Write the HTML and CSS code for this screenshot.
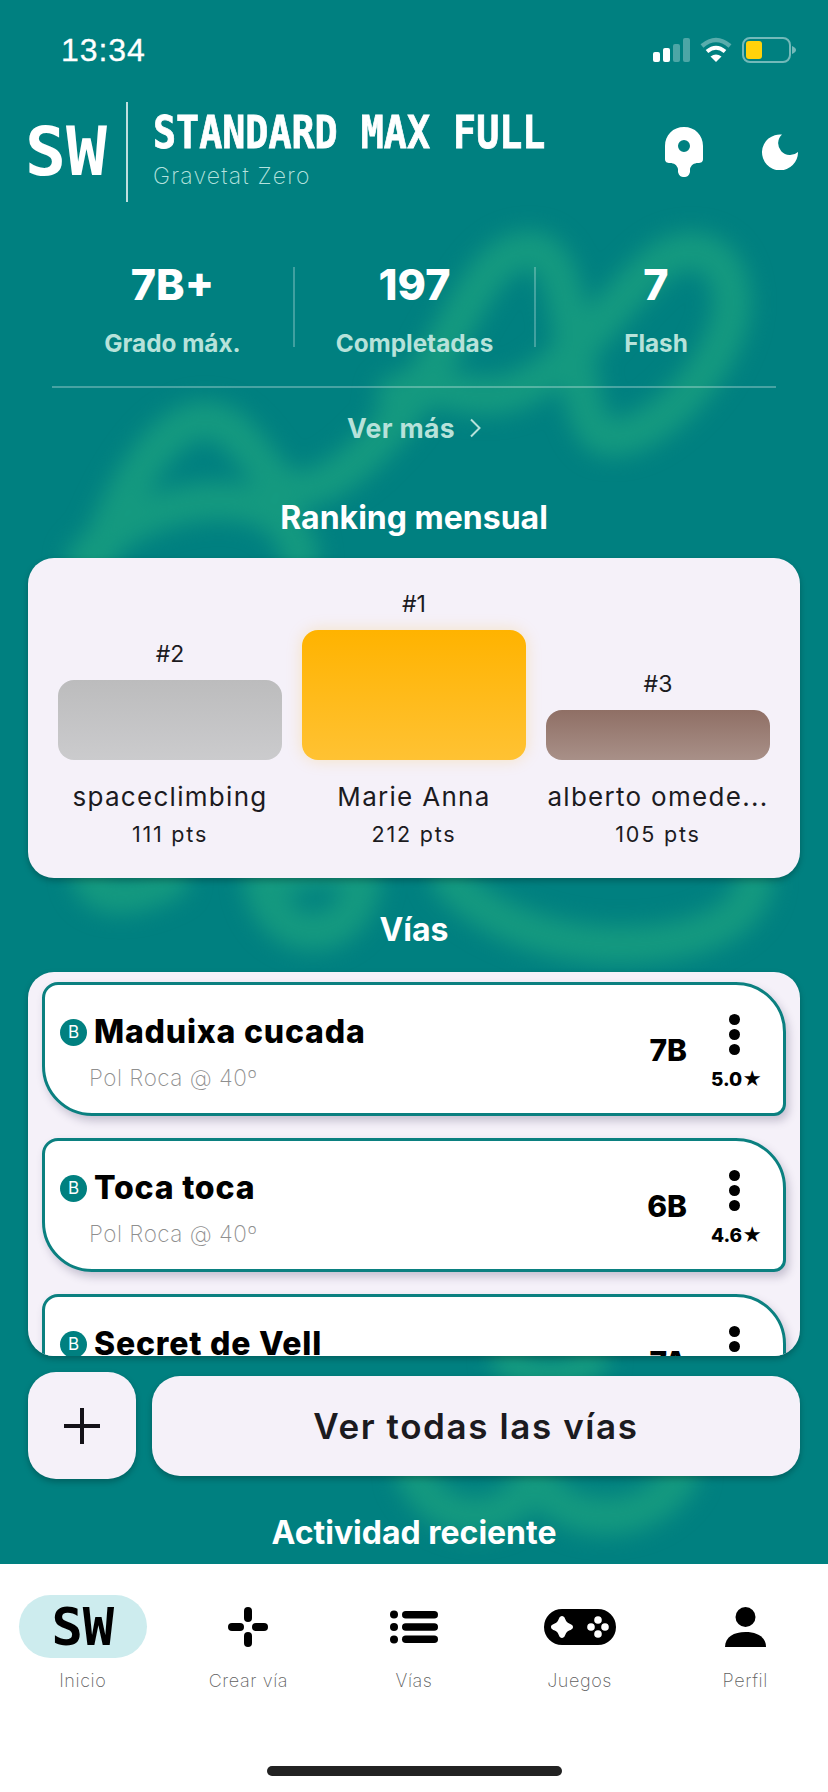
FILE: index.html
```html
<!DOCTYPE html>
<html lang="es">
<head>
<meta charset="utf-8">
<title>Standard Max Full</title>
<link rel="stylesheet" href="styles.css">
</head>
<body>
<div class="app">
  <main class="main">
    <svg class="decor" viewBox="0 0 828 1564" aria-hidden="true">
      <path d="M75 660C85 550 150 420 205 420C250 420 265 495 300 490C345 485 400 425 430 370C470 300 490 250 530 250C585 250 565 425 605 437C660 445 735 350 732 300C730 250 690 240 660 262C615 295 565 385 500 395C450 400 430 375 395 395"/>
      <path d="M85 560C130 505 230 485 275 515C300 535 300 555 300 560"/>
      <path d="M90 875C95 900 130 900 170 880M262 880C270 945 350 950 362 885C368 860 300 860 270 885M450 880C490 925 560 945 620 945C700 945 750 920 755 880"/>
      <path d="M415 1475C440 1530 510 1530 535 1475C560 1530 650 1530 680 1475M510 1360C530 1385 570 1385 590 1360"/>
    </svg>
    <div class="status">
      <span class="time">13:34</span>
      <div class="status-icons">
        <svg class="ic-signal" viewBox="0 0 37 25"><rect x="0" y="15" width="7" height="10" rx="2" fill="#fff"/><rect x="10" y="11" width="7" height="14" rx="2" fill="#fff"/><rect x="20" y="7" width="7" height="18" rx="2" fill="#fff" opacity=".3"/><rect x="30" y="1" width="7" height="24" rx="2" fill="#fff" opacity=".3"/></svg>
        <svg class="ic-wifi" viewBox="0 0 32 25"><path d="M2 9Q16 -3 30 9" fill="none" stroke="#fff" stroke-width="4.5" opacity=".35"/><path d="M7 14.500Q16 7 25 14.500" fill="none" stroke="#fff" stroke-width="4"/><path d="M10.500 19.500L16 25L21.500 19.500Q16 15.500 10.500 19.500Z" fill="#fff"/></svg>
        <svg class="ic-battery" viewBox="0 0 54 26"><rect x="1" y="1" width="47" height="24" rx="7" fill="none" stroke="#fff" stroke-opacity=".45" stroke-width="2"/><rect x="4" y="4" width="16" height="18" rx="3" fill="#ffd20a"/><path d="M50 9C53 10 54 12 54 13C54 14 53 16 50 17Z" fill="#fff" fill-opacity=".45"/></svg>
      </div>
    </div>

    <header class="head">
      <span class="logo">SW</span>
      <span class="head-rule"></span>
      <div class="head-text">
        <h1 class="wall">STANDARD MAX FULL</h1>
        <p class="gym">Gravetat Zero</p>
      </div>
      <svg class="ic-pin" viewBox="0 0 38 50"><path fill="#fff" fill-rule="evenodd" d="M19 0C30 0 38 8 38 19V32C38 35 36 36 33 36C29 36 26 38 25 42V45C24 49 22 50 19 50C16 50 14 49 13 45V42C12 38 9 36 5 36C2 36 0 35 0 32V19C0 8 8 0 19 0ZM19 13A6 6 0 1 0 19 25A6 6 0 1 0 19 13Z"/></svg>
      <svg class="ic-moon" viewBox="0 0 36 36"><path fill="#fff" d="M20 0.500A18 18 0 1 0 36 18A11.500 11.500 0 0 1 20 0.500Z"/></svg>
    </header>

    <section class="stats">
      <div class="stat"><b class="stat-value">7B+</b><span class="stat-label">Grado máx.</span></div>
      <div class="stat stat-mid"><b class="stat-value">197</b><span class="stat-label">Completadas</span></div>
      <div class="stat"><b class="stat-value">7</b><span class="stat-label">Flash</span></div>
    </section>
    <div class="more">Ver más
      <svg class="ic-chev" viewBox="0 0 12 20"><path d="M2 1.500L10.500 10L2 18.500" fill="none" stroke="currentColor" stroke-width="2"/></svg>
    </div>

    <h2 class="section-title first">Ranking mensual</h2>
    <section class="card podium">
      <div class="pod-col"><span class="pos">#2</span><div class="bar bar-silver"></div><span class="pod-name">spaceclimbing</span><span class="pod-pts">111 pts</span></div>
      <div class="pod-col"><span class="pos">#1</span><div class="bar bar-gold"></div><span class="pod-name">Marie Anna</span><span class="pod-pts">212 pts</span></div>
      <div class="pod-col"><span class="pos">#3</span><div class="bar bar-bronze"></div><span class="pod-name">alberto omede...</span><span class="pod-pts">105 pts</span></div>
    </section>

    <h2 class="section-title vias">Vías</h2>
    <section class="card routes">
      <article class="route">
        <div class="route-main">
          <div class="route-head"><span class="badge">B</span><span class="route-name">Maduixa cucada</span></div>
          <p class="route-sub">Pol Roca @ 40º</p>
        </div>
        <span class="grade">7B</span>
        <div class="route-side"><span class="dots"><i></i><i></i><i></i></span><span class="rating">5.0★</span></div>
      </article>
      <article class="route">
        <div class="route-main">
          <div class="route-head"><span class="badge">B</span><span class="route-name">Toca toca</span></div>
          <p class="route-sub">Pol Roca @ 40º</p>
        </div>
        <span class="grade">6B</span>
        <div class="route-side"><span class="dots"><i></i><i></i><i></i></span><span class="rating">4.6★</span></div>
      </article>
      <article class="route">
        <div class="route-main">
          <div class="route-head"><span class="badge">B</span><span class="route-name">Secret de Vell</span></div>
          <p class="route-sub">Pol Roca @ 40º</p>
        </div>
        <span class="grade">7A</span>
        <div class="route-side"><span class="dots"><i></i><i></i><i></i></span><span class="rating">4.8★</span></div>
      </article>
    </section>

    <div class="actions">
      <button class="btn-add" aria-label="Añadir"><svg class="ic-plus" viewBox="0 0 36 36"><path d="M18 0V36M0 18H36" stroke="#141218" stroke-width="4"/></svg></button>
      <button class="btn-all">Ver todas las vías</button>
    </div>

    <h2 class="section-title activity">Actividad reciente</h2>
  </main>

  <nav class="nav">
    <div class="nav-items">
      <div class="nav-item">
        <span class="nav-icon active"><span class="logo-small">SW</span></span>
        <span class="nav-label">Inicio</span>
      </div>
      <div class="nav-item">
        <span class="nav-icon"><svg class="ic-create" viewBox="0 0 40 40"><rect x="16" y="0" width="8" height="15" rx="4"/><rect x="16" y="25" width="8" height="15" rx="4"/><rect x="0" y="16" width="16" height="8" rx="4"/><rect x="24" y="16" width="16" height="8" rx="4"/></svg></span>
        <span class="nav-label">Crear vía</span>
      </div>
      <div class="nav-item">
        <span class="nav-icon"><svg class="ic-list" viewBox="0 0 48 34"><circle cx="4" cy="4.500" r="4"/><circle cx="4" cy="17" r="4"/><circle cx="4" cy="29.500" r="4"/><rect x="12" y="1" width="36" height="7.500" rx="3.750"/><rect x="12" y="13.250" width="36" height="7.500" rx="3.750"/><rect x="12" y="25.500" width="36" height="7.500" rx="3.750"/></svg></span>
        <span class="nav-label">Vías</span>
      </div>
      <div class="nav-item">
        <span class="nav-icon"><svg class="ic-game" viewBox="0 0 72 36"><path fill-rule="evenodd" d="M18 0H54A18 18 0 0 1 54 36H18A18 18 0 0 1 18 0ZM18 7C21 7 21 11 23 13C25 15 29 15 29 18C29 21 25 21 23 23C21 25 21 29 18 29C15 29 15 25 13 23C11 21 7 21 7 18C7 15 11 15 13 13C15 11 15 7 18 7Z"/><g fill="#fff"><circle cx="54" cy="11" r="3.800"/><circle cx="54" cy="25" r="3.800"/><circle cx="47" cy="18" r="3.800"/><circle cx="61" cy="18" r="3.800"/></g></svg></span>
        <span class="nav-label">Juegos</span>
      </div>
      <div class="nav-item">
        <span class="nav-icon"><svg class="ic-user" viewBox="0 0 41 40"><circle cx="20.500" cy="10" r="10"/><path d="M0 40C0 30 9 25 20.500 25C32 25 41 30 41 40Z"/></svg></span>
        <span class="nav-label">Perfil</span>
      </div>
    </div>
    <div class="home-bar"></div>
  </nav>
</div>
</body>
</html>
```
FILE: styles.css
```css
* { box-sizing: border-box; }
html, body { margin: 0; padding: 0; }
body { font-family: "Inter", "DejaVu Sans", sans-serif; background: #fff; }
h1, h2, p { margin: 0; }

.app { width: 828px; height: 1792px; display: flex; flex-direction: column; overflow: hidden; }
.main { position: relative; height: 1564px; background: #008080; overflow: hidden; color: #fff; }
.main > * { position: relative; }
.main > .decor { position: absolute; left: 0; top: 0; width: 828px; height: 1564px; filter: blur(11px); }
.decor path { fill: none; stroke: #14997f; stroke-width: 38; stroke-linecap: round; stroke-linejoin: round; }

.status { height: 102px; padding: 36px 32px 0 61px; display: flex; justify-content: space-between; align-items: flex-start; }
.time { font: 400 32px/28px "Liberation Sans", sans-serif; letter-spacing: .9px; -webkit-text-stroke: .3px #fff; }
.status-icons { display: flex; align-items: flex-start; gap: 10px; padding-top: 1px; }
.ic-signal { width: 37px; height: 25px; }
.ic-wifi { width: 32px; height: 25px; }
.ic-battery { width: 54px; height: 26px; }

.head { height: 100px; padding: 0 30px 0 25px; display: flex; align-items: center; }
.logo { width: 82px; font: 700 68px/70px "DejaVu Sans Mono", monospace; }
.head-rule { width: 2px; height: 100px; margin: 0 25px 0 19px; background: rgba(255,255,255,.75); }
.head-text { flex: 1; align-self: flex-start; padding-top: 8px; }
.wall { font: 700 45px/46px "DejaVu Sans Mono", monospace; white-space: nowrap; -webkit-text-stroke: .8px #fff; transform: scaleX(.852); transform-origin: left; }
.gym { margin-top: 6px; font-size: 23px; line-height: 28px; font-weight: 200; color: #b5e2de; letter-spacing: 1.200px; }
.ic-pin { width: 38px; height: 50px; margin: 0 59px 0 0; }
.ic-moon { width: 36px; height: 36px; }

.stats { margin: 65px 52px 0; padding-bottom: 39px; border-bottom: 2px solid rgba(255,255,255,.28); display: grid; grid-template-columns: 241px 1fr 240px; height: 121px; }
.stat { height: 80px; display: flex; flex-direction: column; align-items: center; }
.stat-mid { border-left: 2px solid rgba(255,255,255,.25); border-right: 2px solid rgba(255,255,255,.25); }
.stat-value { margin-top: -5px; font-size: 43px; line-height: 44px; font-weight: 800; }
.stat-label { margin-top: 23px; font-size: 24.300px; line-height: 28px; font-weight: 700; color: #b7e2da; }

.more { height: 80px; display: flex; align-items: center; justify-content: center; gap: 14px; font-size: 26.500px; font-weight: 700; color: #b7e2da; letter-spacing: .4px; }
.ic-chev { width: 12px; height: 20px; }

.section-title { height: 40px; text-align: center; font-size: 32px; line-height: 40px; font-weight: 700; }
.section-title.first { margin-top: 30px; }
.section-title.vias { margin-top: 32px; }
.section-title.activity { margin-top: 34px; }

.card { margin: 20px 28px 0; background: #f5f1f9; border-radius: 26px; box-shadow: 0 3px 6px rgba(0,0,0,.25); color: #1c1b1f; }

.podium { height: 320px; padding: 0 30px; display: grid; grid-template-columns: repeat(3, 224px); gap: 20px; }
.pod-col { display: flex; flex-direction: column; align-items: center; justify-content: flex-end; padding-bottom: 30px; }
.pos { font-size: 23px; line-height: 30px; margin-bottom: 11px; }
.bar { width: 100%; border-radius: 16px; }
.bar-silver { height: 80px; background: linear-gradient(#bcbcbd, #cbcbcd); }
.bar-gold { height: 130px; background: linear-gradient(#ffb300, #ffc233); box-shadow: 0 0 16px rgba(255,179,0,.22); }
.bar-bronze { height: 50px; background: linear-gradient(#8f6f65, #a89088); }
.pod-name { margin-top: 21px; font-size: 26px; line-height: 32px; letter-spacing: 1.300px; white-space: nowrap; }
.pod-pts { margin-top: 7px; font-size: 21.500px; line-height: 28px; letter-spacing: 1.800px; }

.routes { margin-top: 22px; height: 384px; padding: 10px 14px; overflow: hidden; display: flex; flex-direction: column; gap: 22px; }
.route { flex: none; height: 134px; padding: 27px 20px 0 15px; display: flex; align-items: flex-start; background: #fff; border: 3px solid #0b8080; border-radius: 16px 50px 12px 50px; box-shadow: 3px 5px 8px rgba(60,50,90,.25); color: #000; }
.route-main { flex: 1; min-width: 0; }
.route-head { display: flex; align-items: center; gap: 7px; height: 40px; }
.badge { width: 27px; height: 27px; border-radius: 50%; background: #008080; color: #fff; font-size: 17px; line-height: 27px; text-align: center; }
.route-name { font-size: 32px; line-height: 40px; font-weight: 800; letter-spacing: .8px; white-space: nowrap; }
.route-sub { margin: 12px 0 0 29px; font-size: 22.500px; line-height: 28px; font-weight: 200; color: #8f8f8f; letter-spacing: .5px; }
.grade { margin: 18px 22px 0 0; font-size: 30px; line-height: 40px; font-weight: 800; }
.route-side { width: 54px; margin-top: 2px; display: flex; flex-direction: column; }
.dots { display: flex; flex-direction: column; gap: 4px; margin-left: 20px; }
.dots i { display: block; width: 11px; height: 11px; border-radius: 50%; background: #000; }
.rating { margin: 13px 0 0 2px; font-size: 19px; line-height: 24px; font-weight: 800; white-space: nowrap; }

.actions { margin: 16px 28px 0; height: 107px; display: flex; align-items: center; gap: 16px; }
.actions button { border: 0; background: #f5f1f9; box-shadow: 0 3px 6px rgba(0,0,0,.25); color: #1c1b1f; }
.btn-add { width: 108px; height: 107px; border-radius: 28px; display: flex; align-items: center; justify-content: center; padding: 0; }
.ic-plus { width: 36px; height: 36px; }
.btn-all { flex: 1; height: 100px; border-radius: 28px; font: 600 35px/40px "Inter", sans-serif; letter-spacing: 1.600px; }

.nav { height: 228px; background: #fff; display: flex; flex-direction: column; }
.nav-items { display: grid; grid-template-columns: repeat(5, 1fr); padding: 31px 0 0; }
.nav-item { display: flex; flex-direction: column; align-items: center; }
.nav-icon { width: 128px; height: 63px; border-radius: 32px; display: flex; align-items: center; justify-content: center; }
.nav-icon.active { background: #cdecee; }
.nav-icon svg { fill: #000; display: block; }
.logo-small { font: 700 52px/56px "DejaVu Sans Mono", monospace; color: #000; }
.nav-label { margin-top: 9px; font-size: 18px; line-height: 28px; font-weight: 200; color: #5f5f5f; letter-spacing: .6px; }
.ic-create { width: 40px; height: 40px; }
.ic-list { width: 48px; height: 34px; }
.ic-game { width: 72px; height: 36px; }
.ic-user { width: 41px; height: 40px; }
.home-bar { width: 295px; height: 10px; margin: 71px auto 0; background: #222; border-radius: 5px; }
```
